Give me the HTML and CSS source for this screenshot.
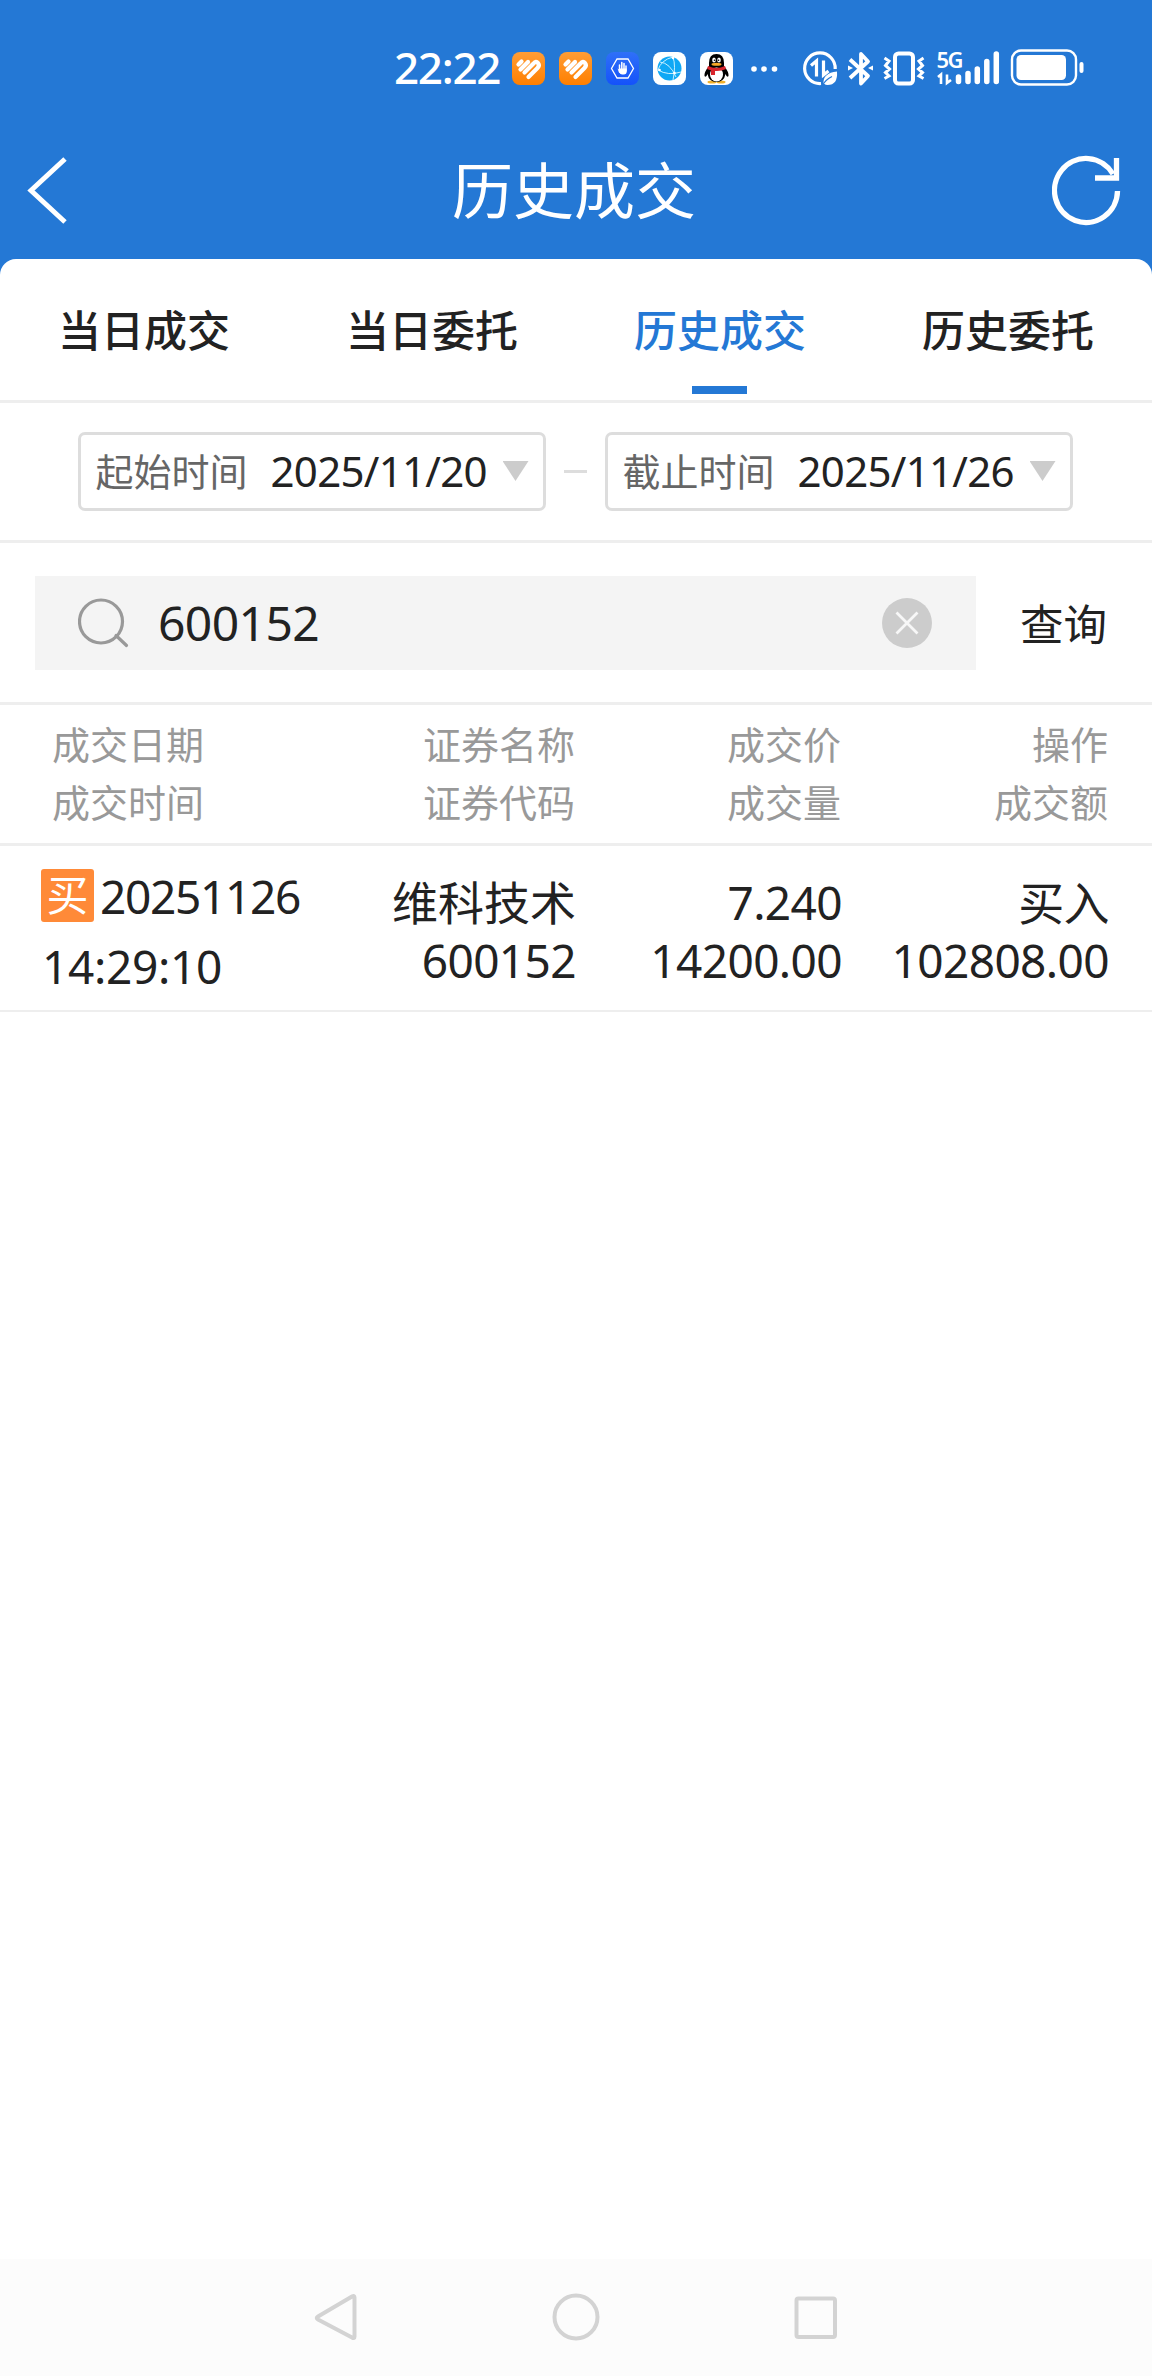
FILE: index.html
```
<!DOCTYPE html>
<html lang="zh-CN">
<head>
    <meta charset="UTF-8">
    <meta name="viewport" content="width=device-width, initial-scale=1.0">
    <title>历史成交</title>
    <link rel="stylesheet" href="styles.css">
</head>
<body>
    <!-- Status bar -->
    <div class="status-bar">
        <span class="clock">22:22</span>
        <div class="app-icons">
            <svg class="app-icon" viewBox="0 0 33 33">
                <defs>
                    <linearGradient id="orange" x1="0" y1="0" x2="0" y2="1">
                        <stop offset="0" stop-color="#ff9d35"/>
                        <stop offset="1" stop-color="#ff7f00"/>
                    </linearGradient>
                    <linearGradient id="blue" x1="0" y1="0" x2="0" y2="1">
                        <stop offset="0" stop-color="#2f70f8"/>
                        <stop offset="1" stop-color="#1452fa"/>
                    </linearGradient>
                </defs>
                <rect width="33" height="33" rx="8" fill="url(#orange)"/>
                <g fill="none" stroke="#fff" stroke-width="4.200" stroke-linecap="round" stroke-linejoin="round">
                    <path d="M6.5 12.5L9.500 9.500"/>
                    <path d="M8.5 17.5L16 10"/>
                    <path d="M12.500 20.5L21.500 11.5Q24 8.500 26 11Q28 13.5 25.500 16L16.500 25"/>
                </g>
            </svg>
            <svg class="app-icon" viewBox="0 0 33 33">
                <rect width="33" height="33" rx="8" fill="url(#orange)"/>
                <g fill="none" stroke="#fff" stroke-width="4.200" stroke-linecap="round" stroke-linejoin="round">
                    <path d="M6.5 12.5L9.500 9.500"/>
                    <path d="M8.5 17.5L16 10"/>
                    <path d="M12.500 20.5L21.500 11.5Q24 8.500 26 11Q28 13.5 25.500 16L16.500 25"/>
                </g>
            </svg>
            <svg class="app-icon" viewBox="0 0 33 33">
                <rect width="33" height="33" rx="8" fill="url(#blue)"/>
                <path d="M11 7h11l5.500 9.500L22 26H11L5.500 16.500z" fill="none" stroke="#fff" stroke-width="1.300"/>
                <path d="M13.500 20v-7M15.800 18v-7.500M18 18v-6.500M20 19v-5" stroke="#fff" stroke-width="1.500" stroke-linecap="round"/>
                <path d="M11.500 16.500l1.500 1 0-1h7.700v3q0 3-3 3h-1.500q-2 0-3-2z" fill="#fff"/>
            </svg>
            <svg class="app-icon" viewBox="0 0 33 33">
                <rect width="33" height="33" rx="8" fill="#fff"/>
                <circle cx="16.500" cy="16.500" r="12" fill="#0fa8f5"/>
                <g fill="none" stroke="#c9f1ff" stroke-width="1">
                    <path d="M20 5Q8 8 5 18Q15 24 28 20"/>
                    <path d="M7 10Q17 11 23 25"/>
                    <path d="M20 5Q23 14 20 28"/>
                </g>
                <circle cx="20" cy="6" r="1.300" fill="#fff"/>
                <circle cx="6.500" cy="18" r="1.300" fill="#fff"/>
                <circle cx="21.500" cy="21" r="1.300" fill="#fff"/>
            </svg>
            <svg class="app-icon" viewBox="0 0 33 33">
                <rect width="33" height="33" rx="8" fill="#fff"/>
                <ellipse cx="12" cy="30" rx="4.500" ry="1.500" fill="#efb02c"/>
                <ellipse cx="21" cy="30" rx="4.500" ry="1.500" fill="#efb02c"/>
                <path d="M9 11Q9 2 16.500 2T24 11V14Q29 20 28.500 24Q27 26 25.500 22Q24 30 16.500 30T7.500 22Q6 26 4.500 24Q4 20 9 14z" fill="#000"/>
                <ellipse cx="16.500" cy="22.500" rx="6.500" ry="7" fill="#fff"/>
                <ellipse cx="14" cy="8" rx="1.800" ry="2.500" fill="#fff"/>
                <ellipse cx="19" cy="8" rx="1.800" ry="2.500" fill="#fff"/>
                <circle cx="14.500" cy="8.300" r=".8"/>
                <circle cx="18.500" cy="8.300" r=".8"/>
                <ellipse cx="16.500" cy="12.300" rx="5" ry="1.500" fill="#f7a928"/>
                <path d="M8 14Q16.500 18 25 14L26 17Q21 19.500 15 19V23H11V18.500L7 17z" fill="#d8242c"/>
            </svg>
        </div>
        <svg class="more-dots" viewBox="0 0 28 8" fill="#fff">
            <circle cx="4" cy="4" r="2.800"/>
            <circle cx="14" cy="4" r="2.800"/>
            <circle cx="24.500" cy="4" r="2.800"/>
        </svg>
        <!-- data saver, bluetooth, vibrate, signal, battery -->
        <svg class="system-icons" viewBox="0 0 284 40" fill="none" stroke="#fff">
            <path d="M21 34.500A15.300 15.300 0 1 1 35.200 20" stroke-width="3.200"/>
            <path d="M11 16.500l5.500-4.500v15.500M23.500 11.500v14.500l5-4" stroke-width="3.200"/>
            <path d="M23.500 35q-1-11 13.500-12.500q1 13.500-9.500 13.500q-2 0-3-1z" fill="#fff" stroke="none"/>
            <path d="M22.500 36.500q3-6 9.500-9" stroke="#2478d5" stroke-width="1.200"/>
            <path d="M50 10.500l18 16.500-7 7.500V5l7 7.500L50 29" stroke-width="3.800" stroke-linejoin="round"/>
            <path d="M48 16.500l5 2.500-5 2.500zM73 16.500l-5 2.500 5 2.500z" fill="#fff" stroke="none"/>
            <rect x="95" y="4.500" width="18" height="30" rx="3.500" stroke-width="4"/>
            <path d="M84.500 9l4.500 3-3.500 4.500 4 3.500-4 3.500 3.500 3.500-4.500 2.500M123.500 9l-4.500 3 3.500 4.500-4 3.500 4 3.500-3.500 3.500 4.500 2.500" stroke-width="3"/>
            <text x="136.500" y="18.500" class="network-label">5G</text>
            <path d="M138 28l3-2.500V35M147 25.500V34l4-3" stroke-width="2.600"/>
            <path d="M158.500 28v4.500M168 24.500v8M177.300 20v12.500M186.800 12.500v20M196.300 5v27.500" stroke-width="5.500" stroke-linecap="round"/>
            <rect x="212" y="1.500" width="64" height="34" rx="9" stroke-width="2.400"/>
            <rect x="216.500" y="6" width="49.500" height="25" rx="4.500" fill="#fff" stroke="none"/>
            <rect x="279.500" y="13" width="4" height="11" rx="2" fill="#fff" stroke="none"/>
        </svg>
    </div>

    <!-- Title bar -->
    <header class="title-bar">
        <svg class="back-icon" viewBox="0 0 42 70">
            <path d="M39 4L5 35.500L39 67" fill="none" stroke="#fff" stroke-width="5"/>
        </svg>
        <h1>历史成交</h1>
        <svg class="refresh-icon" viewBox="0 0 70 72" fill="none" stroke="#fff" stroke-width="5.300">
            <path d="M65.500 37A31.500 32 0 1 1 61 20"/>
            <path d="M64.500 4V24H43"/>
        </svg>
    </header>

    <main class="panel">
        <nav class="tabs">
            <a class="tab">当日成交</a>
            <a class="tab">当日委托</a>
            <a class="tab active">历史成交</a>
            <a class="tab">历史委托</a>
        </nav>

        <section class="date-range">
            <div class="date-box">
                <span class="date-label">起始时间</span>
                <span class="date-value">2025/11/20</span>
                <span class="arrow"></span>
            </div>
            <span class="dash"></span>
            <div class="date-box">
                <span class="date-label">截止时间</span>
                <span class="date-value">2025/11/26</span>
                <span class="arrow"></span>
            </div>
        </section>

        <section class="search-row">
            <div class="search-box">
                <svg class="search-icon" viewBox="0 0 52 52" fill="none" stroke="#999" stroke-width="3.200">
                    <circle cx="23" cy="24.500" r="21.500"/>
                    <path d="M38 38.500L48.500 48.500" stroke-linecap="round"/>
                </svg>
                <span class="search-text">600152</span>
                <svg class="clear-icon" viewBox="0 0 50 50">
                    <circle cx="25" cy="25" r="25" fill="#ccc"/>
                    <path d="M14.500 14.500l21 21M35.500 14.500l-21 21" stroke="#f7f7f7" stroke-width="2.800"/>
                </svg>
            </div>
            <span class="query-btn">查询</span>
        </section>

        <section class="table-head">
            <div class="col">
                <span>成交日期</span>
                <span>成交时间</span>
            </div>
            <div class="col">
                <span>证券名称</span>
                <span>证券代码</span>
            </div>
            <div class="col">
                <span>成交价</span>
                <span>成交量</span>
            </div>
            <div class="col">
                <span>操作</span>
                <span>成交额</span>
            </div>
        </section>

        <section class="table-row">
            <div class="col time-col">
                <div class="trade-date"><span class="badge">买</span><span>20251126</span></div>
                <span class="trade-time">14:29:10</span>
            </div>
            <div class="col">
                <span class="stock-name">维科技术</span>
                <span>600152</span>
            </div>
            <div class="col">
                <span>7.240</span>
                <span>14200.00</span>
            </div>
            <div class="col">
                <span>买入</span>
                <span>102808.00</span>
            </div>
        </section>
    </main>

    <!-- System navigation -->
    <footer class="nav-bar">
        <svg class="nav-icon" viewBox="0 0 50 50">
            <path d="M43.500 4.500V43.500Q43.500 46 41 44.500L7 26.500Q4.500 25 7 23.500L41 3.500Q43.500 2 43.500 4.500z"/>
        </svg>
        <svg class="nav-icon" viewBox="0 0 50 50">
            <circle cx="25" cy="24" r="21.500"/>
        </svg>
        <svg class="nav-icon" viewBox="0 0 50 50">
            <rect x="5.500" y="5.500" width="38.500" height="38.500" rx="2"/>
        </svg>
    </footer>
</body>
</html>
```
FILE: styles.css
```
* {
    box-sizing: border-box;
    margin: 0;
    padding: 0;
}

body {
    display: flex;
    flex-direction: column;
    height: 2376px;
    background: #2478d5;
    color: #222;
    font-family: 'Noto Sans', 'Noto Sans CJK SC', sans-serif;
}

svg {
    display: block;
    flex-shrink: 0;
}

/* status bar */
.status-bar {
    display: flex;
    align-items: center;
    height: 121px;
    padding: 16px 0 0 394px;
}

.clock {
    width: 118px;
    margin-top: -4px;
    color: #fff;
    font-size: 44px;
    font-weight: 500;
    line-height: 60px;
    letter-spacing: -1.3px;
}

.app-icons {
    display: flex;
    gap: 14px;
}

.app-icon {
    width: 33px;
    height: 33px;
}

.more-dots {
    width: 28px;
    height: 8px;
    margin-left: 17px;
}

.system-icons {
    width: 284px;
    height: 40px;
    margin-left: 22px;
    overflow: visible;
}

.network-label {
    font-size: 22px;
    font-weight: 600;
    letter-spacing: -1.5px;
    fill: #fff;
    stroke: none;
}

/* title bar */
.title-bar {
    display: flex;
    justify-content: space-between;
    align-items: center;
    height: 138px;
    padding: 0 30px 0 26px;
}

.title-bar h1 {
    color: #fff;
    font-size: 61px;
    font-weight: 400;
    line-height: 80px;
    padding: 2px 0 0 28px;
}

.back-icon {
    width: 42px;
    height: 70px;
}

.refresh-icon {
    width: 70px;
    height: 72px;
}

/* content */
.panel {
    flex: 1;
    background: #fff;
    border-radius: 16px 16px 0 0;
}

.tabs {
    display: grid;
    grid-template-columns: repeat(4, 1fr);
    height: 144px;
    border-bottom: 3px solid #eee;
}

.tab {
    display: flex;
    flex-direction: column;
    align-items: center;
    height: 135px;
    font-size: 43px;
    font-weight: 500;
    line-height: 143px;
}

.tab.active {
    color: #2478d5;
}

.tab.active::after {
    content: '';
    width: 55px;
    height: 8px;
    margin: -16px 1px 0 0;
    background: #2478d5;
}

.date-range {
    display: flex;
    align-items: center;
    justify-content: center;
    height: 140px;
    padding: 0 2px 1px 0;
    border-bottom: 3px solid #eee;
}

.date-box {
    display: flex;
    align-items: center;
    width: 468px;
    height: 79px;
    padding-left: 15px;
    border: 3px solid #ddd;
    border-radius: 7px;
}

.date-label {
    width: 175px;
    color: #666;
    font-size: 38px;
    line-height: 60px;
}

.date-value {
    width: 232px;
    font-size: 42px;
    line-height: 60px;
    letter-spacing: -0.7px;
}

.arrow {
    width: 26px;
    height: 20px;
    background: #ccc;
    clip-path: polygon(0 0, 100% 0, 50% 100%);
}

.dash {
    width: 23px;
    height: 3px;
    margin: 0 18px;
    background: #ddd;
}

.search-row {
    display: flex;
    align-items: center;
    height: 162px;
    padding-left: 35px;
    border-bottom: 3px solid #eee;
}

.search-box {
    display: flex;
    align-items: center;
    width: 941px;
    height: 94px;
    padding: 0 44px 0 43px;
    background: #f4f4f4;
}

.search-icon {
    width: 52px;
    height: 52px;
}

.search-text {
    flex: 1;
    margin-left: 28px;
    font-size: 48px;
    line-height: 70px;
    letter-spacing: -0.6px;
}

.clear-icon {
    width: 50px;
    height: 50px;
}

.query-btn {
    margin: 2px 0 0 44px;
    font-size: 43.5px;
    line-height: 60px;
}

/* table */
.table-head,
.table-row {
    display: grid;
    grid-template-columns: 299px 224px 266px 267px;
    padding-left: 52px;
}

.col {
    display: flex;
    flex-direction: column;
    align-items: flex-end;
}

.col:first-child {
    align-items: flex-start;
}

.table-head {
    height: 141px;
    padding-top: 10px;
    border-bottom: 3px solid #eee;
    color: #999;
    font-size: 38px;
    line-height: 58px;
}

.table-row {
    grid-template-columns: 310px 225px 266px 267px;
    height: 166px;
    padding: 27px 0 0 41px;
    border-bottom: 2px solid #eee;
    font-size: 46px;
    line-height: 58px;
    letter-spacing: -0.6px;
}

.stock-name {
    letter-spacing: 0;
}

.time-col {
    margin-top: -4px;
}

.trade-date {
    display: flex;
    align-items: center;
    height: 53px;
    gap: 6px;
    letter-spacing: -1.3px;
}

.badge {
    width: 53px;
    height: 53px;
    border-radius: 3px;
    background: #ff8a38;
    color: #fff;
    font-size: 42px;
    line-height: 51px;
    text-align: center;
    letter-spacing: 0;
}

.trade-time {
    margin: 15px 0 0 1px;
    letter-spacing: -0.3px;
}

/* bottom navigation */
.nav-bar {
    display: flex;
    justify-content: center;
    gap: 190px;
    height: 117px;
    padding-top: 34px;
    background: #fcfcfc;
}

.nav-icon {
    width: 50px;
    height: 50px;
    fill: none;
    stroke: #d3d3d3;
    stroke-width: 4;
}
```
